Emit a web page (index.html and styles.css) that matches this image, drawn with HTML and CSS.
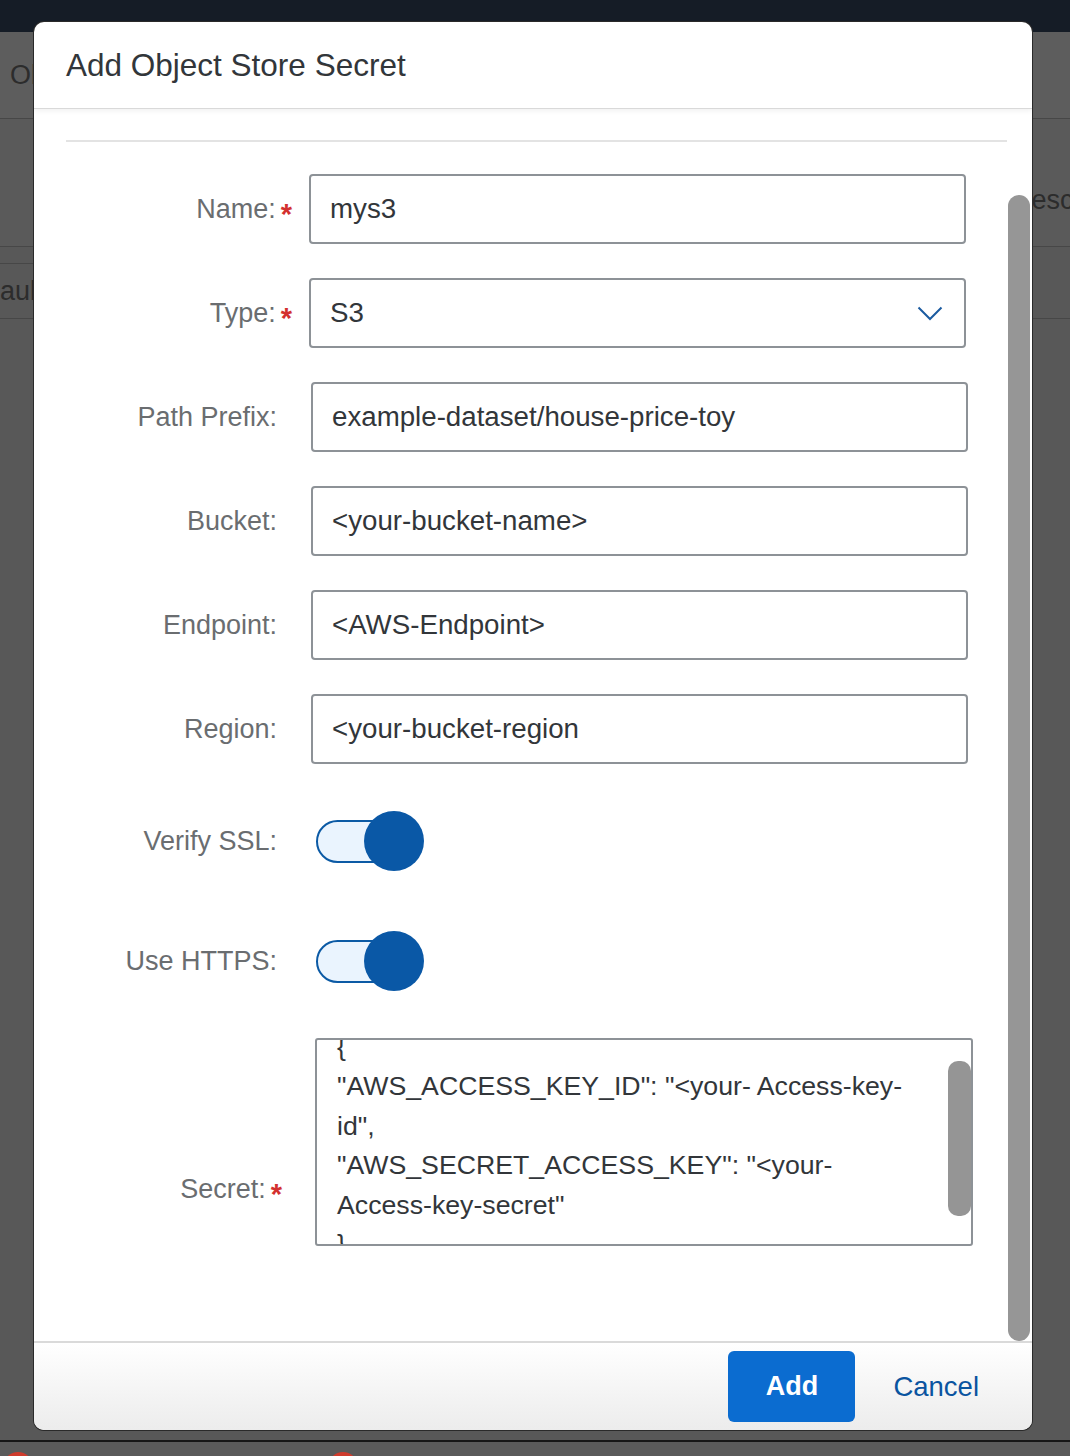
FILE: index.html
```html
<!DOCTYPE html>
<html lang="en">
<head>
<meta charset="utf-8">
<title>Add Object Store Secret</title>
<link rel="stylesheet" href="styles.css">
</head>
<body>
<div class="page">
  <div class="topbar"></div>
  <main class="bg-main">
    <div class="bg-row bg-title"><span class="bg-text">Object Stores</span></div>
    <div class="bg-row bg-head"><span class="bg-text bg-right">Description</span></div>
    <div class="bg-row bg-data">
      <div class="bg-tab"></div>
      <span class="bg-text bg-cell">ault secret</span>
    </div>
  </main>
  <div class="bg-bottom"><span class="dot"></span><span class="dot dot2"></span></div>
</div>

<div class="dialog" role="dialog" aria-label="Add Object Store Secret">
  <header class="dlg-header"><h1 class="dlg-title">Add Object Store Secret</h1></header>
  <section class="dlg-body">
    <div class="sep"></div>
    <div class="form">
      <div class="row">
        <label class="lbl req">Name:<span class="ast">*</span></label>
        <div class="input req-field">mys3</div>
      </div>
      <div class="row">
        <label class="lbl req">Type:<span class="ast">*</span></label>
        <div class="input req-field select">
          <span>S3</span>
          <svg class="chev" width="26" height="15" viewBox="0 0 26 15"><path d="M1.5 1.5 L13 13 L24.5 1.5" fill="none" stroke="#1b5ba0" stroke-width="2"/></svg>
        </div>
      </div>
      <div class="row">
        <label class="lbl">Path Prefix:</label>
        <div class="input">example-dataset/house-price-toy</div>
      </div>
      <div class="row">
        <label class="lbl">Bucket:</label>
        <div class="input">&lt;your-bucket-name&gt;</div>
      </div>
      <div class="row">
        <label class="lbl">Endpoint:</label>
        <div class="input">&lt;AWS-Endpoint&gt;</div>
      </div>
      <div class="row">
        <label class="lbl">Region:</label>
        <div class="input">&lt;your-bucket-region</div>
      </div>
      <div class="row toggle-row">
        <label class="lbl">Verify SSL:</label>
        <div class="switch" role="switch" aria-checked="true"><span class="track"></span><span class="knob"></span></div>
      </div>
      <div class="row toggle-row">
        <label class="lbl">Use HTTPS:</label>
        <div class="switch" role="switch" aria-checked="true"><span class="track"></span><span class="knob"></span></div>
      </div>
      <div class="row secret-row">
        <label class="lbl req secret-lbl">Secret:<span class="ast">*</span></label>
        <div class="textarea">
          <div class="ta-lines">
            <div>{</div>
            <div>"AWS_ACCESS_KEY_ID": "&lt;your- Access-key-</div>
            <div>id",</div>
            <div>"AWS_SECRET_ACCESS_KEY": "&lt;your-</div>
            <div>Access-key-secret"</div>
            <div>}</div>
          </div>
          <span class="ta-thumb"></span>
        </div>
      </div>
    </div>
    <span class="body-thumb"></span>
  </section>
  <footer class="dlg-footer">
    <button class="btn-add" type="button">Add</button>
    <button class="btn-cancel" type="button">Cancel</button>
  </footer>
</div>
</body>
</html>
```

FILE: styles.css
```css
* { box-sizing: border-box; }

html, body {
  margin: 0;
  padding: 0;
}

body {
  width: 1070px;
  height: 1456px;
  overflow: hidden;
  font-family: "Liberation Sans", Arial, sans-serif;
  background: #585858;
  position: relative;
}

/* ---------- background page (dimmed) ---------- */
.page {
  height: 1456px;
  display: flex;
  flex-direction: column;
}

.topbar {
  height: 32px;
  background: #151c26;
  flex: none;
}

.bg-main {
  flex: 1;
  background: #585858;
}

.bg-row {
  display: flex;
  align-items: center;
  border-bottom: 1px solid #474747;
}

.bg-title {
  height: 87px;
  background: #5d5d5d;
}

.bg-head {
  height: 128px;
  background: #5a5a5a;
  padding-top: 36px;
}

.bg-data {
  height: 72px;
  flex-direction: column;
  align-items: flex-start;
}

.bg-tab {
  width: 60px;
  height: 17px;
  border-bottom: 1px solid #474747;
}

.bg-text {
  font-size: 27px;
  color: #2c2c2c;
  padding-left: 10px;
  white-space: nowrap;
}

.bg-right {
  padding-left: 1012px;
}

.bg-cell {
  padding-left: 0;
  line-height: 54px;
}

.bg-bottom {
  height: 16px;
  flex: none;
  border-top: 2px solid #161616;
  background: #5a5a5a;
  display: flex;
  gap: 295px;
  padding-left: 3px;
  padding-top: 10px;
  overflow: hidden;
}

.dot {
  width: 30px;
  height: 30px;
  border-radius: 50%;
  background: #cf3b2c;
  flex: none;
}

/* ---------- dialog ---------- */
.dialog {
  position: absolute;
  left: 34px;
  top: 22px;
  width: 998px;
  height: 1408px;
  background: #fff;
  border-radius: 10px;
  box-shadow: 0 0 0 1px #2a2a2a;
  display: flex;
  flex-direction: column;
  overflow: hidden;
}

.dlg-header {
  height: 87px;
  flex: none;
  display: flex;
  align-items: center;
  padding-left: 32px;
  border-bottom: 1px solid #d9d9d9;
  box-shadow: 0 2px 5px rgba(0, 0, 0, 0.06);
  position: relative;
  z-index: 1;
}

.dlg-title {
  margin: 0;
  font-size: 31.5px;
  font-weight: 400;
  color: #32363a;
}

.dlg-body {
  flex: 1;
  position: relative;
  padding: 0 25px 0 32px;
  overflow: hidden;
}

.sep {
  margin-top: 31px;
  height: 2px;
  background: #e3e3e3;
}

.form {
  margin-top: 32px;
  display: flex;
  flex-direction: column;
  gap: 34px;
}

.row {
  display: flex;
  align-items: center;
  height: 70px;
}

.lbl {
  width: 230px;
  flex: none;
  text-align: right;
  padding-right: 19px;
  font-size: 27px;
  line-height: 32px;
  color: #6a6d70;
  white-space: nowrap;
}

.lbl.req {
  padding-right: 4px;
}

.ast {
  color: #d3302f;
  font-weight: 700;
  font-size: 29px;
  line-height: 0;
  margin-left: 5px;
  vertical-align: -6px;
}

.input {
  width: 657px;
  height: 70px;
  margin-left: 15px;
  border: 2px solid #8d9297;
  border-radius: 4px;
  padding: 0 19px;
  font-size: 27.7px;
  line-height: 66px;
  color: #32363a;
  white-space: nowrap;
  overflow: hidden;
}

.input.req-field {
  margin-left: 13px;
}

.select {
  display: flex;
  align-items: center;
  justify-content: space-between;
  padding-right: 21px;
}

.chev {
  display: block;
  flex: none;
}

/* toggles */
.toggle-row {
  height: 86px;
}

.switch {
  position: relative;
  width: 108px;
  height: 60px;
  margin-left: 20px;
}

.track {
  position: absolute;
  left: 0;
  top: 9px;
  width: 96px;
  height: 43px;
  border-radius: 22px;
  border: 2px solid #0b5aa5;
  background: #eaf4fe;
}

.knob {
  position: absolute;
  right: 0;
  top: 0;
  width: 60px;
  height: 60px;
  border-radius: 50%;
  background: #0a58a6;
}

/* secret textarea */
.secret-row {
  height: 208px;
  align-items: flex-start;
}

.lbl.secret-lbl {
  padding-right: 14px;
  margin-top: 135px;
}

.textarea {
  position: relative;
  width: 658px;
  height: 208px;
  margin-left: 19px;
  border: 2px solid #8d9297;
  border-radius: 3px;
  overflow: hidden;
}

.ta-lines {
  margin-top: -12px;
  padding-left: 20px;
  font-size: 26.7px;
  line-height: 39.4px;
  color: #32363a;
  white-space: nowrap;
}

.ta-thumb {
  position: absolute;
  right: 0;
  top: 21px;
  width: 23px;
  height: 155px;
  border-radius: 10px;
  background: #959595;
}

.body-thumb {
  position: absolute;
  right: 2px;
  top: 86px;
  width: 22px;
  height: 1146px;
  border-radius: 11px;
  background: #969696;
}

/* footer */
.dlg-footer {
  height: 89px;
  flex: none;
  border-top: 2px solid #dadada;
  background: linear-gradient(#ffffff, #ececec);
  display: flex;
  align-items: center;
  justify-content: flex-end;
  padding-right: 53px;
  gap: 38px;
}

.btn-add {
  width: 127px;
  height: 71px;
  border: none;
  border-radius: 6px;
  background: #0b6cd0;
  color: #fff;
  font-family: "Liberation Sans", Arial, sans-serif;
  font-weight: 700;
  font-size: 27px;
  padding: 0;
}

.btn-cancel {
  border: none;
  background: none;
  padding: 0;
  color: #0a54a0;
  font-family: "Liberation Sans", Arial, sans-serif;
  font-size: 27.5px;
}
```
